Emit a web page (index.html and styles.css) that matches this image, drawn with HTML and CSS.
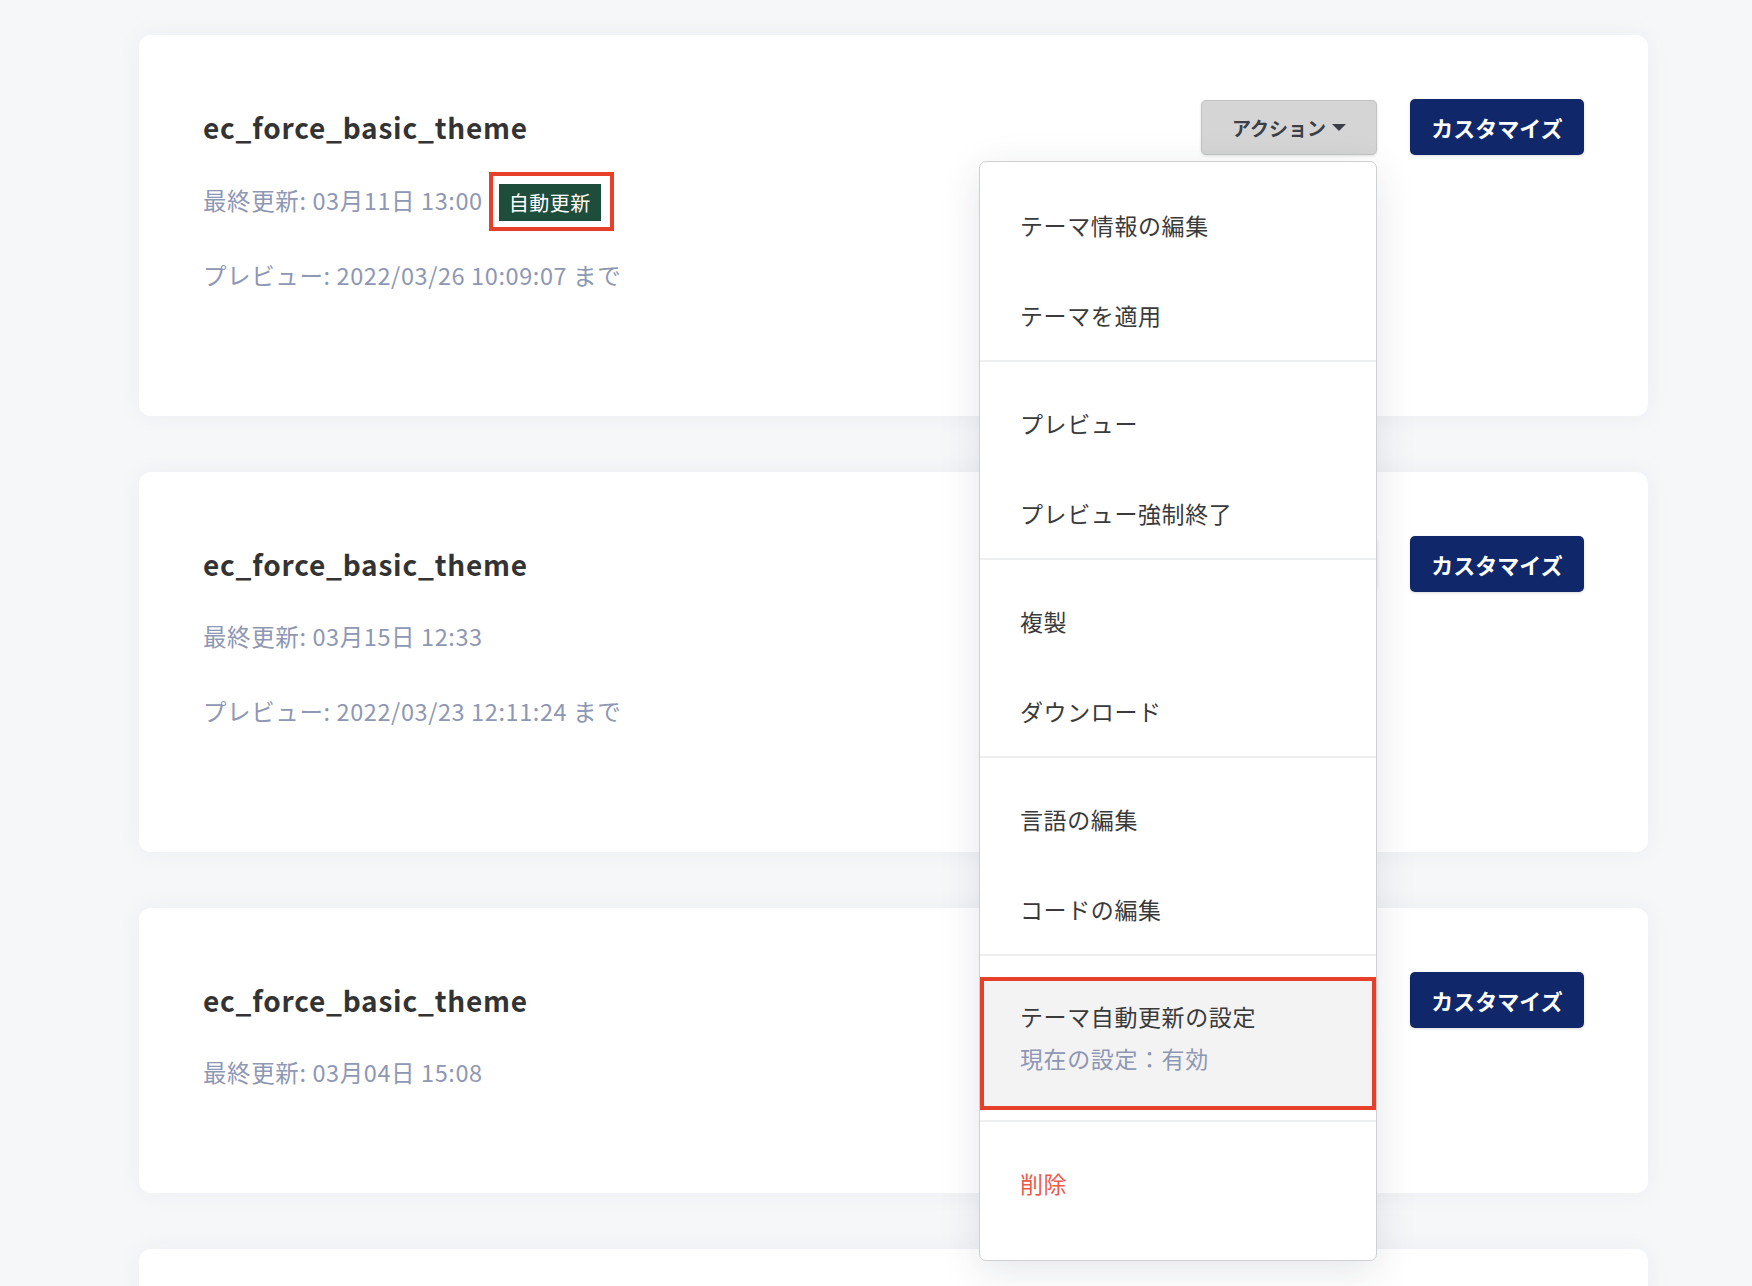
FILE: index.html
```html
<!DOCTYPE html>
<html lang="ja">
<head>
    <meta charset="UTF-8">
    <meta name="viewport" content="width=device-width, initial-scale=1.0">
    <title>テーマ一覧</title>
    <link rel="stylesheet" href="styles.css">
</head>
<body>
    <div class="theme-list">
        <!-- Theme 1 (menu open) -->
        <div class="theme-card">
            <div class="card-head">
                <h2 class="theme-name">ec_force_basic_theme</h2>
                <div class="card-actions">
                    <div class="dropdown">
                        <button class="btn-action">アクション<span class="caret"></span></button>
                        <div class="dropdown-menu">
                            <div class="menu-group">
                                <a class="menu-item" href="#">テーマ情報の編集</a>
                                <a class="menu-item" href="#">テーマを適用</a>
                            </div>
                            <div class="menu-group">
                                <a class="menu-item" href="#">プレビュー</a>
                                <a class="menu-item" href="#">プレビュー強制終了</a>
                            </div>
                            <div class="menu-group">
                                <a class="menu-item" href="#">複製</a>
                                <a class="menu-item" href="#">ダウンロード</a>
                            </div>
                            <div class="menu-group">
                                <a class="menu-item" href="#">言語の編集</a>
                                <a class="menu-item" href="#">コードの編集</a>
                            </div>
                            <div class="menu-group setting-group">
                                <a class="menu-item setting-item" href="#">
                                    <span>テーマ自動更新の設定</span>
                                    <span class="setting-state">現在の設定：有効</span>
                                </a>
                            </div>
                            <div class="menu-group last">
                                <a class="menu-item danger" href="#">削除</a>
                            </div>
                        </div>
                    </div>
                    <button class="btn-customize">カスタマイズ</button>
                </div>
            </div>
            <p class="meta">最終更新: 03月11日 13:00<span class="badge">自動更新</span></p>
            <p class="meta preview">プレビュー: 2022/03/26 10:09:07 まで</p>
        </div>

        <!-- Theme 2 -->
        <div class="theme-card">
            <div class="card-head">
                <h2 class="theme-name">ec_force_basic_theme</h2>
                <div class="card-actions">
                    <div class="dropdown">
                        <button class="btn-action">アクション<span class="caret"></span></button>
                    </div>
                    <button class="btn-customize">カスタマイズ</button>
                </div>
            </div>
            <p class="meta">最終更新: 03月15日 12:33</p>
            <p class="meta preview">プレビュー: 2022/03/23 12:11:24 まで</p>
        </div>

        <!-- Theme 3 -->
        <div class="theme-card">
            <div class="card-head">
                <h2 class="theme-name">ec_force_basic_theme</h2>
                <div class="card-actions">
                    <div class="dropdown">
                        <button class="btn-action">アクション<span class="caret"></span></button>
                    </div>
                    <button class="btn-customize">カスタマイズ</button>
                </div>
            </div>
            <p class="meta">最終更新: 03月04日 15:08</p>
        </div>

        <!-- Theme 4 -->
        <div class="theme-card">
            <div class="card-head">
                <h2 class="theme-name">ec_force_basic_theme</h2>
                <div class="card-actions">
                    <div class="dropdown">
                        <button class="btn-action">アクション<span class="caret"></span></button>
                    </div>
                    <button class="btn-customize">カスタマイズ</button>
                </div>
            </div>
            <p class="meta">最終更新: 02月28日 10:15</p>
        </div>
    </div>
</body>
</html>
```

FILE: styles.css
```css
* {
    box-sizing: border-box;
    margin: 0;
    padding: 0;
}

body {
    background: #f6f7f9;
    font-family: "Noto Sans CJK JP", "Noto Sans", sans-serif;
    color: #333;
}

/* Theme list */
.theme-list {
    width: 1509px;
    margin-left: 139px;
    padding-top: 35px;
    display: flex;
    flex-direction: column;
    gap: 56px;
}

.theme-card {
    background: #fff;
    border-radius: 12px;
    box-shadow: 0 0 24px rgba(30, 50, 90, 0.05);
    padding: 64px 64px 103px;
}

.card-head {
    display: flex;
    align-items: center;
    justify-content: space-between;
    height: 56px;
}

.theme-name {
    font-size: 28px;
    font-weight: 700;
    letter-spacing: 0.8px;
    color: #333;
}

.card-actions {
    display: flex;
    align-items: center;
    gap: 33px;
}

.dropdown {
    position: relative;
}

.btn-action {
    width: 176px;
    height: 55px;
    background: #d5d5d5;
    border: 1px solid #c3c3c3;
    border-radius: 5px;
    box-shadow: 0 1px 3px rgba(0, 0, 0, 0.12);
    font-family: inherit;
    font-size: 19px;
    font-weight: 700;
    color: #3b3f47;
    display: flex;
    align-items: center;
    justify-content: center;
    gap: 6px;
    cursor: pointer;
}

.caret {
    border-left: 7px solid transparent;
    border-right: 7px solid transparent;
    border-top: 7px solid #3b3f47;
}

.btn-customize {
    width: 174px;
    height: 56px;
    background: #10286a;
    border: none;
    border-radius: 5px;
    box-shadow: 0 1px 3px rgba(0, 0, 0, 0.15);
    font-family: inherit;
    font-size: 22px;
    font-weight: 700;
    color: #fff;
    cursor: pointer;
}

/* Meta lines */
.meta {
    margin-top: 26px;
    font-size: 23.5px;
    line-height: 36px;
    letter-spacing: 0.6px;
    color: #8e97b3;
    display: flex;
    align-items: center;
}

.meta.preview {
    margin-top: 39px;
    margin-bottom: 20px;
}

.badge {
    position: relative;
    margin: 3px 0 -3px 16px;
    background: #1f4d3b;
    color: #fff;
    font-size: 20px;
    line-height: 37px;
    height: 37px;
    padding: 0 10px;
    letter-spacing: 0.5px;
}

/* red annotation frame */
.badge::after {
    content: "";
    position: absolute;
    left: -10px;
    right: -13px;
    top: -12px;
    bottom: -10px;
    border: 4px solid #e6402a;
}

/* Dropdown menu */
.dropdown-menu {
    position: absolute;
    top: 61px;
    right: 0;
    width: 398px;
    background: #fff;
    border: 1px solid #cfd0d2;
    border-radius: 7px;
    box-shadow: 0 10px 40px rgba(40, 50, 70, 0.12);
    padding: 2px 0 32px;
    z-index: 10;
}

.menu-group {
    padding-top: 16px;
    border-bottom: 2px solid #eeeff0;
}

.menu-group.last {
    border-bottom: none;
}

.menu-item {
    display: flex;
    align-items: center;
    height: 90px;
    padding-left: 40px;
    font-size: 23px;
    letter-spacing: 0.6px;
    color: #3a3a3a;
    text-decoration: none;
}

.setting-group {
    padding-top: 21px;
    padding-bottom: 10px;
}

.setting-item {
    height: 133px;
    flex-direction: column;
    align-items: flex-start;
    justify-content: center;
    gap: 6px;
    padding-left: 36px;
    padding-bottom: 13px;
    background: #f3f3f4;
    border: 4px solid #e6402a;
    line-height: 36px;
}

.setting-state {
    color: #8e97b3;
}

.menu-item.danger {
    color: #ec5a4a;
}
```
